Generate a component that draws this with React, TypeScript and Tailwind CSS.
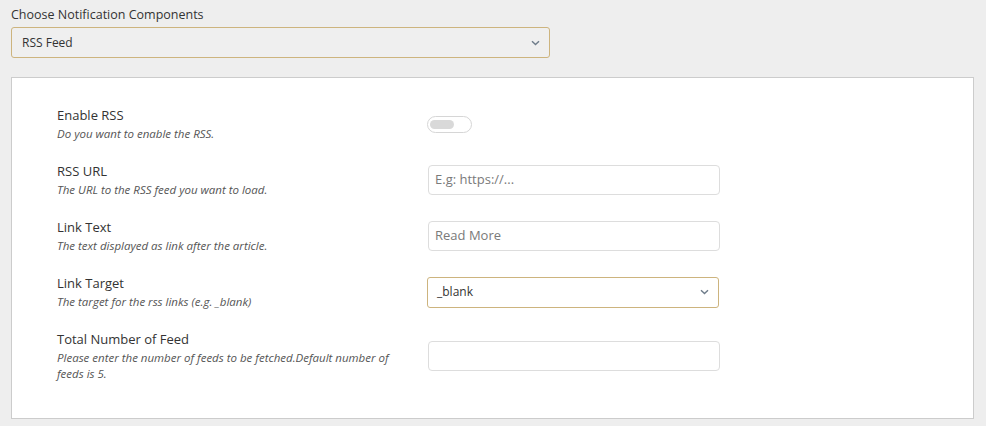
import React from "react";

const font = { fontFamily: '"Open Sans", "Noto Sans", sans-serif' };

function Chevron() {
  return (
    <svg width="9" height="6" viewBox="0 0 9 6" className="shrink-0">
      <path d="M1 1.2 L4.5 4.6 L8 1.2" fill="none" stroke="#6e7c8a" strokeWidth="1.4" />
    </svg>
  );
}

function Row({ label, desc, children, last }: { label: string; desc: string; children: React.ReactNode; last?: boolean }) {
  return (
    <div className={`flex items-center ${last ? "" : "pb-[20px]"}`}>
      <div className="w-[371px] shrink-0 pr-[20px]">
        <div className="text-[13px] leading-[18px] text-[#333333]">{label}</div>
        <div className="mt-[2px] text-[11.5px] leading-[16px] italic text-[#555555]">{desc}</div>
      </div>
      <div className="w-[292px]">{children}</div>
    </div>
  );
}

function TextInput({ placeholder }: { placeholder?: string }) {
  return (
    <div className="h-[30px] w-[292px] rounded-[4px] border border-[#dddddd] bg-white flex items-center px-[6px] text-[13px] text-[#7a7a7a]">
      {placeholder}
    </div>
  );
}

export default function App() {
  return (
    <div style={font} className="w-[986px] h-[426px] bg-[#eeeeee] pt-[6px] pl-[11px] overflow-hidden">
      <div className="text-[12.5px] leading-[18px] text-[#333333]">Choose Notification Components</div>
      <div className="mt-[3px] h-[31px] w-[539px] rounded-[3px] border border-[#cdb47e] bg-[#efefef] flex items-center justify-between pl-[10px] pr-[9px] text-[12px] text-[#333333]">
        <span>RSS Feed</span>
        <Chevron />
      </div>
      <div className="mt-[19px] w-[963px] border border-[#cccccc] bg-white pt-[28px] pb-[36px] pl-[45px]">
        <Row label="Enable RSS" desc="Do you want to enable the RSS.">
          <div className="h-[17px] w-[45px] rounded-full border border-[#d6d6d6] bg-white flex items-center pl-[2px] ml-[-1px]">
            <div className="h-[9px] w-[24px] rounded-full bg-[#d9d9d9]" />
          </div>
        </Row>
        <Row label="RSS URL" desc="The URL to the RSS feed you want to load.">
          <TextInput placeholder="E.g: https://..." />
        </Row>
        <Row label="Link Text" desc="The text displayed as link after the article.">
          <TextInput placeholder="Read More" />
        </Row>
        <Row label="Link Target" desc="The target for the rss links (e.g. _blank)">
          <div className="ml-[-1px] h-[31px] w-[292px] rounded-[3px] border border-[#cdb47e] bg-white flex items-center justify-between pl-[9px] pr-[9px] text-[12px] text-[#333333]">
            <span>_blank</span>
            <Chevron />
          </div>
        </Row>
        <Row last label="Total Number of Feed" desc="Please enter the number of feeds to be fetched.Default number of feeds is 5.">
          <TextInput />
        </Row>
      </div>
    </div>
  );
}
